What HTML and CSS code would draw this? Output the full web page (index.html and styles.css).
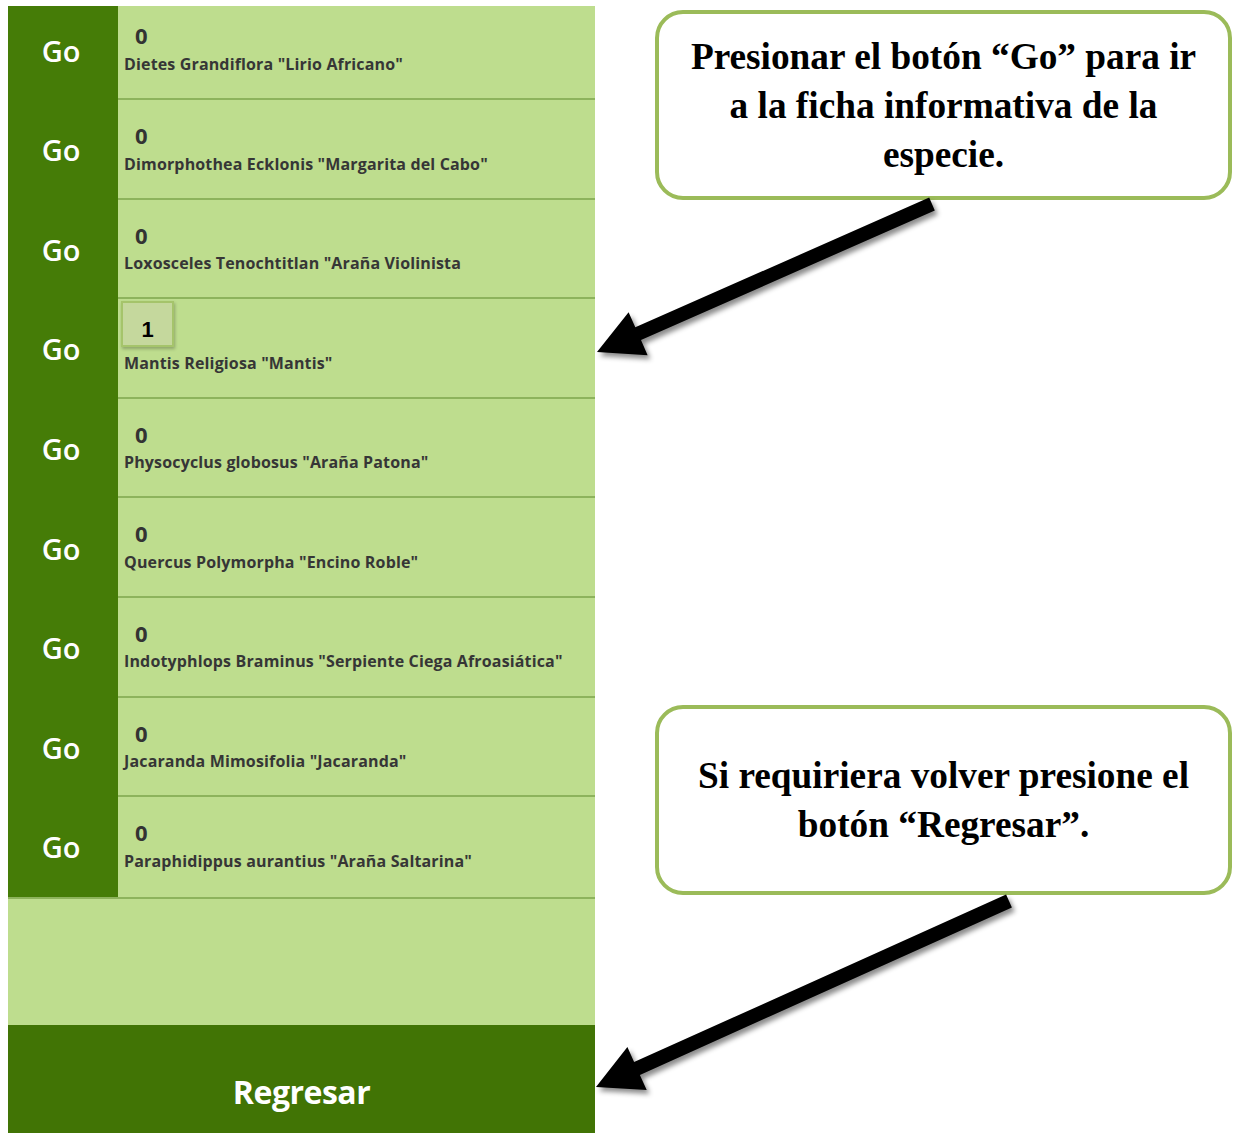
FILE: index.html
```html
<!DOCTYPE html>
<html>
    <head>
        <meta charset="utf-8">
        <title>Especies</title>
        <link rel="stylesheet" href="styles.css">
    </head>
    <body>
        <div class="page">
            <section class="app">
                <div class="list-window">
                    <ul class="species-list">
                        <li class="row">
                            <div class="go">Go</div>
                            <div class="info">
                                <div class="count">0</div>
                                <div class="name">Dietes Grandiflora "Lirio Africano"</div>
                            </div>
                        </li>
                        <li class="row">
                            <div class="go">Go</div>
                            <div class="info">
                                <div class="count">0</div>
                                <div class="name">Dimorphothea Ecklonis "Margarita del Cabo"</div>
                            </div>
                        </li>
                        <li class="row">
                            <div class="go">Go</div>
                            <div class="info">
                                <div class="count">0</div>
                                <div class="name">Loxosceles Tenochtitlan "Araña Violinista</div>
                            </div>
                        </li>
                        <li class="row">
                            <div class="go">Go</div>
                            <div class="info">
                                <div class="count boxed">1</div>
                                <div class="name">Mantis Religiosa "Mantis"</div>
                            </div>
                        </li>
                        <li class="row">
                            <div class="go">Go</div>
                            <div class="info">
                                <div class="count">0</div>
                                <div class="name">Physocyclus globosus "Araña Patona"</div>
                            </div>
                        </li>
                        <li class="row">
                            <div class="go">Go</div>
                            <div class="info">
                                <div class="count">0</div>
                                <div class="name">Quercus Polymorpha "Encino Roble"</div>
                            </div>
                        </li>
                        <li class="row">
                            <div class="go">Go</div>
                            <div class="info">
                                <div class="count">0</div>
                                <div class="name">Indotyphlops Braminus "Serpiente Ciega Afroasiática"</div>
                            </div>
                        </li>
                        <li class="row">
                            <div class="go">Go</div>
                            <div class="info">
                                <div class="count">0</div>
                                <div class="name">Jacaranda Mimosifolia "Jacaranda"</div>
                            </div>
                        </li>
                        <li class="row">
                            <div class="go">Go</div>
                            <div class="info">
                                <div class="count">0</div>
                                <div class="name">Paraphidippus aurantius "Araña Saltarina"</div>
                            </div>
                        </li>
                    </ul>
                    <div class="spacer"></div>
                </div>
                <div class="back-bar">Regresar</div>
            </section>

            <aside class="notes">
                <div class="callout callout-top">
                    <p>Presionar el botón “Go” para ir<br>a la ficha informativa de la<br>especie.</p>
                </div>
                <div class="callout callout-bottom">
                    <p>Si requiriera volver presione el<br>botón “Regresar”.</p>
                </div>
            </aside>
        </div>

        <!-- flechas de las notas -->
        <svg class="arrows" width="1233" height="1133" viewBox="0 0 1233 1133">
            <defs>
                <filter id="shadow" x="-10%" y="-10%" width="130%" height="140%">
                    <feDropShadow dx="3" dy="4" stdDeviation="2.5" flood-color="#000" flood-opacity="0.45"/>
                </filter>
            </defs>
            <polygon filter="url(#shadow)" points="934.8,210.4 641,340.1 647.6,355.2 597,352 628.6,312.2 635.3,327.3 929.2,197.6"/>
            <polygon filter="url(#shadow)" points="1011.9,907.4 639.9,1074.9 646.7,1089.9 596,1087 627.4,1047.1 634.1,1062.1 1006.1,894.6"/>
        </svg>
    </body>
</html>
```

FILE: styles.css
```css
html, body {
    margin: 0;
    height: 100%;
    overflow: hidden;
    background-color: #fff;
}

.page {
    display: flex;
    align-items: flex-start;
    padding: 6px 0 0 8px;
}

/* panel de la app */
.app {
    width: 587px;
    font-family: 'Open Sans', 'Noto Sans', sans-serif;
}

.list-window {
    overflow: hidden;
}

.species-list {
    list-style: none;
    margin: -5.6px 0 0 0;
    padding: 0;
}

.row {
    display: flex;
    height: 99.6px;
}

.go {
    width: 110px;
    flex-shrink: 0;
    box-sizing: border-box;
    padding-right: 4px;
    background-color: #457c07;
    color: #fff;
    font-size: 29px;
    font-weight: 600;
    display: flex;
    align-items: center;
    justify-content: center;
}

.info {
    flex: 1;
    background-color: #bedd8e;
    border-bottom: 2px solid #8db35c;
    box-sizing: border-box;
    padding-top: 2px;
}

.row:last-child .info {
    border-bottom: none;
}

.count {
    height: 46px;
    margin-left: 17px;
    display: flex;
    align-items: flex-end;
    font-size: 22px;
    font-weight: 700;
    line-height: 26px;
    color: #333;
}

.count.boxed {
    width: 53px;
    margin-left: 3px;
    box-sizing: border-box;
    align-items: center;
    justify-content: center;
    padding-top: 12px;
    background-color: #c5d89d;
    border: 2px solid #a5c46b;
    box-shadow: 1px 2px 3px rgba(0, 0, 0, 0.25);
    font-family: 'Liberation Sans', Arial, sans-serif;
    font-size: 22px;
    color: #000;
}

.name {
    margin-top: 5.5px;
    padding-left: 6px;
    font-size: 16px;
    font-weight: 700;
    line-height: 20px;
    color: #363636;
    letter-spacing: 0.15px;
    white-space: nowrap;
}

.spacer {
    height: 128px;
    box-sizing: border-box;
    background-color: #bedd8e;
    border-top: 2px solid #8db35c;
}

.back-bar {
    height: 108px;
    box-sizing: border-box;
    padding-top: 47px;
    background-color: #417405;
    color: #fff;
    text-align: center;
    font-size: 32px;
    font-weight: 700;
    line-height: 40px;
    letter-spacing: -0.5px;
}

/* notas */
.notes {
    margin-left: 60px;
    display: flex;
    flex-direction: column;
}

.callout {
    width: 577px;
    box-sizing: border-box;
    border: 4px solid #9bbb59;
    border-radius: 28px;
    display: flex;
    align-items: center;
    justify-content: center;
}

.callout p {
    margin: 0;
    text-align: center;
    font-family: 'Liberation Serif', 'Times New Roman', serif;
    font-weight: 700;
    font-size: 37.3px;
    line-height: 49px;
    color: #000;
}

.callout-top {
    margin-top: 4px;
    height: 190px;
}

.callout-bottom {
    margin-top: 505px;
    height: 190px;
}

.arrows {
    position: absolute;
    top: 0;
    left: 0;
    pointer-events: none;
}
```
